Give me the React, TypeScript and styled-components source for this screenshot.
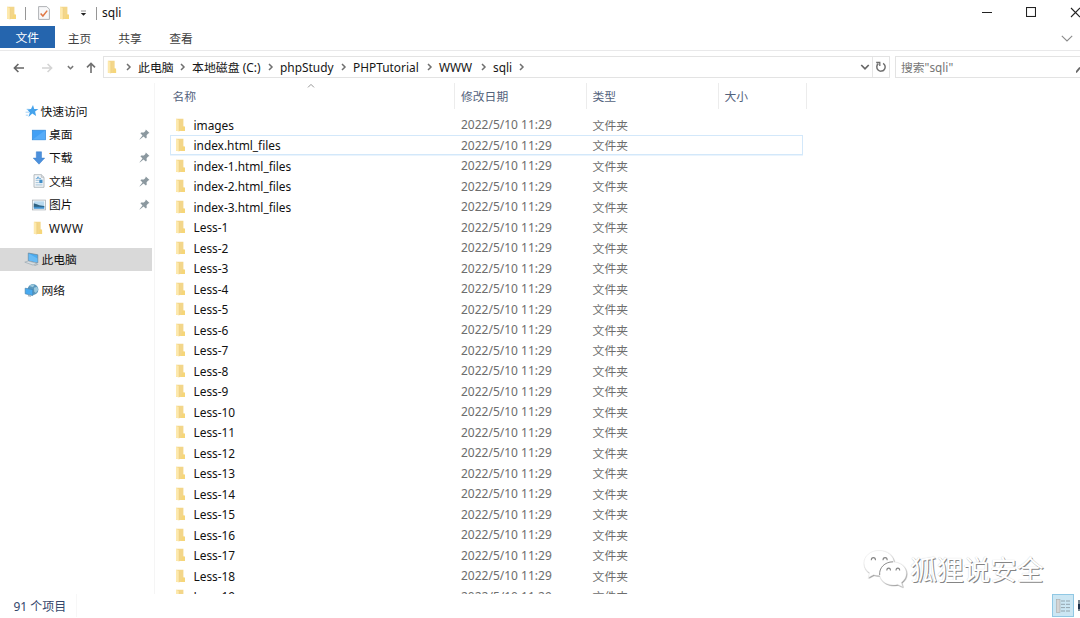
import React from "react";
import styled, { createGlobalStyle } from "styled-components";

const Global = createGlobalStyle`
  * { box-sizing: border-box; }
  html, body { margin: 0; height: 100%; overflow: hidden; background: #fff; }
  body {
    font-family: "Noto Sans", "Noto Sans CJK SC", sans-serif;
    font-size: 12px;
    color: #111;
  }
  svg { display: block; flex: none; }
`;

const Window = styled.div`
  width: 1080px;
  height: 618px;
  display: flex;
  flex-direction: column;
  overflow: hidden;
  background: #fff;
  position: relative;
  white-space: nowrap;
`;

const TitleBar = styled.header`
  height: 26px;
  display: flex;
  align-items: center;
  padding-left: 6px;
`;
const TitleText = styled.span`
  margin-left: 5px;
  line-height: 24px;
  height: 25px;
  color: #111;
`;
const Separator = styled.i<{ $left: number }>`
  width: 1px;
  height: 13px;
  margin-left: ${(p) => p.$left}px;
  background: #969696;
`;
const Gap = styled.i<{ $w: number }>`
  width: ${(p) => p.$w}px;
  flex: none;
`;
const Spacer = styled.i`
  flex: 1;
`;
const WindowControls = styled.div`
  display: flex;
  align-items: center;
  gap: 34px;
  width: 98px;
  height: 24px;
  margin-bottom: 2px;
  overflow: hidden;
`;

const Ribbon = styled.nav`
  height: 25px;
  display: flex;
  align-items: flex-start;
  border-bottom: 1px solid #e9e9ea;
`;
const Tab = styled.span<{ $active?: boolean; $width: number }>`
  width: ${(p) => p.$width}px;
  height: 22px;
  line-height: ${(p) => (p.$active ? 23 : 25)}px;
  text-align: center;
  font-size: 11.8px;
  color: ${(p) => (p.$active ? "#fff" : "#404040")};
  background: ${(p) => (p.$active ? "#2565ae" : "transparent")};
`;
const RibbonToggle = styled.div`
  margin: 9px 7px 0 auto;
`;

const NavBar = styled.div`
  height: 32px;
  display: flex;
  align-items: flex-start;
  padding-top: 5px;
`;
const NavButtons = styled.div`
  width: 103px;
  height: 23px;
  display: flex;
  align-items: center;
  padding-left: 13px;
`;
const AddressBox = styled.div`
  width: 787px;
  height: 22px;
  border: 1px solid #e3e3e3;
  display: flex;
  align-items: center;
  padding-left: 3px;
`;
const Crumb = styled.span<{ $width: number }>`
  width: ${(p) => p.$width}px;
  height: 20px;
  line-height: 20px;
  font-size: 11.9px;
  color: #161616;
`;
const CrumbArrow = styled.span<{ $width: number }>`
  width: ${(p) => p.$width}px;
`;
const RefreshCell = styled.div`
  width: 17px;
  height: 20px;
  border-left: 1px solid #e6e6e6;
  display: flex;
  align-items: center;
  justify-content: center;
`;
const SearchBox = styled.div`
  width: 185px;
  margin-left: 5px;
  height: 22px;
  border: 1px solid #e3e3e3;
  border-right: 0;
  display: flex;
  align-items: flex-start;
  padding-left: 5px;
  line-height: 20px;
  font-size: 11.8px;
  color: #767676;
  overflow: hidden;
`;
const SearchGlyph = styled.svg`
  margin-top: 5px;
`;

const Main = styled.main`
  height: 511px;
  flex: none;
  display: flex;
  overflow: hidden;
`;
const Sidebar = styled.aside`
  width: 155px;
  padding-top: 16.5px;
  border-right: 1px solid #f5f5f5;
`;
const SideItem = styled.div<{ $level?: number; $selected?: boolean; $gap?: number }>`
  width: 152.4px;
  height: 23.4px;
  margin-top: ${(p) => p.$gap || 0}px;
  padding-left: ${(p) => (p.$level ? 31 : 24)}px;
  padding-right: 2.4px;
  display: flex;
  align-items: center;
  background: ${(p) => (p.$selected ? "#d9d9d9" : "transparent")};
`;
const SideLabel = styled.span<{ $level?: number }>`
  margin-left: ${(p) => (p.$level ? 2 : 1.4)}px;
  flex: 1;
  height: 23px;
  line-height: 22px;
  font-size: 11.8px;
`;
const WideLabel = styled.span`
  letter-spacing: 0.5px;
`;

const Content = styled.section`
  flex: 1;
  display: flex;
  flex-direction: column;
`;
const HeaderRow = styled.div`
  height: 31.4px;
  flex: none;
  display: flex;
  font-size: 11.8px;
  color: #53627c;
  position: relative;
`;
const HeaderCell = styled.div<{ $width: number; $pad: number }>`
  width: ${(p) => p.$width}px;
  height: 26px;
  line-height: 26px;
  padding-left: ${(p) => p.$pad}px;
  border-right: 1px solid #ececec;
`;
const SortMark = styled.span`
  position: absolute;
  left: 152px;
  top: -1px;
`;
const FileRow = styled.div<{ $focused?: boolean }>`
  width: 633px;
  height: 20.5px;
  margin-left: 15px;
  flex: none;
  display: flex;
  align-items: center;
  line-height: 20px;
  box-shadow: ${(p) => (p.$focused ? "inset 0 0 0 1px #d3e8fa, 0 1px 0 #eaf4fd" : "none")};
`;
const FileIcon = styled.span`
  width: 23.5px;
  padding-left: 5px;
`;
const FileName = styled.span`
  width: 267.5px;
  font-size: 11.9px;
  letter-spacing: -0.02px;
  color: #111;
`;
const FileDate = styled.span`
  width: 131.6px;
  padding-top: 1px;
  color: #6d6d6d;
`;
const FileType = styled.span`
  font-size: 11.8px;
  color: #6d6d6d;
`;

const StatusBar = styled.footer`
  height: 24px;
  display: flex;
  align-items: flex-start;
  color: #34466b;
`;
const Count = styled.span`
  width: 77px;
  height: 23px;
  line-height: 25px;
  padding-left: 13.5px;
  border-right: 1px solid #f7f7f7;
`;
const ViewButton = styled.div`
  width: 22px;
  height: 23px;
  margin-left: auto;
  border: 1px solid #90c8e4;
  background: #cbe6f3;
  display: flex;
  align-items: center;
  justify-content: center;
`;
const ViewPeek = styled.div`
  width: 6px;
  height: 23px;
  padding: 6px 0 0 4px;
`;

const Watermark = styled.div`
  position: absolute;
  left: 862px;
  top: 548px;
  display: flex;
  align-items: center;
  height: 42px;
`;
const WatermarkText = styled.span`
  margin-left: 2px;
  padding-top: 2px;
  font-size: 27px;
  line-height: 44px;
  letter-spacing: -0.3px;
  color: #fff;
  text-shadow: 1px 1px 0.5px #858585, 0 0 1px #c4c4c4;
`;

const Folder = ({ w = 11, h = 14 }: { w?: number; h?: number }) => (
  <svg width={w} height={h} viewBox="0 0 11 14" preserveAspectRatio="none">
    <path d="M1 .8h7.4v7.7l1.600 1V13H1z" fill="#f3d68a" />
    <path d="M7.400 8.500h2.600V13H6z" fill="#f6d679" />
    <path d="M1 .8l3.200 1.400v11.300L1 12.700z" fill="#fde9ad" />
    <path d="M4.200 2.200v11" stroke="#eccb78" strokeWidth=".6" />
  </svg>
);

const Chevron = ({ dir, color = "#707070", size = 8, sw = 1.5 }: { dir: "right" | "down" | "up"; color?: string; size?: number; sw?: number }) => {
  const d = { right: "M2 1L5 4L2 7", down: "M1 2.4L4 5.4L7 2.4", up: "M1 5.4L4 2.4L7 5.4" }[dir];
  return (
    <svg width={size} height={size} viewBox="0 0 8 8">
      <path d={d} fill="none" stroke={color} strokeWidth={(sw * 8) / size} />
    </svg>
  );
};

const Arrow = ({ dir, color }: { dir: "left" | "right" | "up"; color: string }) => {
  const angle = { left: 0, up: 90, right: 180 }[dir];
  return (
    <svg width="12" height="12" viewBox="0 0 12 12">
      <path d="M11 6H1.5M5.4 2L1.4 6l4 4" fill="none" stroke={color} strokeWidth="1.6" transform={`rotate(${angle} 6 6)`} />
    </svg>
  );
};

const Pin = () => (
  <svg width="11" height="11" viewBox="0 0 11 11">
    <path d="M6.8.5l3.7 3.6-1.3.5-1.6 1.7.1 2.5-.8.8L4.5 7.4.8 10.5.5 10.2l3-3.8L1.4 4.2l.8-.8 2.7.2 1.5-1.7z" fill="#8b989f" />
  </svg>
);

const StarIcon = () => (
  <svg width="15" height="14" viewBox="0 0 15 14">
    <path d="M9 1l1.200 3.900 4.200.1-3.300 2.600 1 4.400-3.800-2.400L4.500 13l1.300-4.600L3 5.300l4-.2z" fill="#45a3ec" />
    <path d="M2.600 5.300h3M1.600 8.200h3.500M1.800 11.200h2.500" stroke="#8ec8f4" strokeWidth=".8" />
  </svg>
);

const DesktopIcon = () => (
  <svg width="16" height="14" viewBox="0 0 16 14">
    <rect x="1.3" y="2.2" width="13.2" height="9.6" fill="#42a0f5" stroke="#3489d8" strokeWidth=".7" />
    <path d="M1.7 11.4L14 2.6v8.8z" fill="#57acf8" />
  </svg>
);

const DownloadIcon = () => (
  <svg width="16" height="14" viewBox="0 0 16 14">
    <path d="M5.3.8h5.2v6.3h3.2L8 13.2 2.2 7.1h3.1z" fill="#4b90dc" stroke="#397dca" strokeWidth=".5" />
  </svg>
);

const DocumentIcon = () => (
  <svg width="16" height="14" viewBox="0 0 16 14">
    <path d="M3 .7h7.300l2.700 2.600v10H3z" fill="#f3f6f8" stroke="#a4adb3" strokeWidth=".8" />
    <path d="M10.300.7v2.600H13" fill="#ddd" stroke="#a4adb3" strokeWidth=".6" />
    <path d="M4.800 4.600h1.700V3h1.200v1.600h2.300" fill="none" stroke="#6ba7d6" strokeWidth=".9" />
    <path d="M4.600 6.400h3.200M4.600 8.600h3.200M4.600 10.900h7" fill="none" stroke="#9dbfd6" strokeWidth=".9" />
    <path d="M8.300 5.700h3.200v3.400H8.300z" fill="#3f8dc6" />
  </svg>
);

const PictureIcon = () => (
  <svg width="16" height="14" viewBox="0 0 16 14">
    <rect x="1.500" y="2.100" width="13" height="9.800" fill="#fff" stroke="#a8b0b5" strokeWidth=".8" />
    <path d="M2.700 3.300h10.600v7.400H2.700z" fill="#b9daf0" />
    <path d="M2.700 5.600c3 0 5 2.400 10.600 2.400v1H2.700z" fill="#2f6280" />
    <path d="M2.700 8.800h10.600v1.900H2.700z" fill="#3f90cd" />
  </svg>
);

const ComputerIcon = () => (
  <svg width="16" height="15" viewBox="0 0 16 15">
    <path d="M4.300 1l9.500 1.800v8L4.300 8.700z" fill="#4aabf0" stroke="#6f8593" strokeWidth=".7" />
    <path d="M4.700 1.500l8.700 5v4l-8.700-2z" fill="#68bbf5" />
    <path d="M.8 10.200l3.500-1.200 8.500 2.300-3.800 1.800z" fill="#d6dde1" stroke="#93a2ac" strokeWidth=".6" />
    <path d="M9.700 13.200l3.800-1.400 1.200.6-3.600 1.600z" fill="#a9b4bb" />
  </svg>
);

const NetworkIcon = () => (
  <svg width="16" height="15" viewBox="0 0 16 15">
    <circle cx="9" cy="6.500" r="5.400" fill="#5b98bd" />
    <path d="M5.500 3c1.600-1.500 4-1.800 5-1.300L9 4.300zM10 4.800l3.300-1 .9 3.200-2.400 3-1.600-1.500z" fill="#9cc9dd" />
    <path d="M1.200 5.200l7.600 1.400v6L1.200 10.800z" fill="#48aaf0" stroke="#4683ae" strokeWidth=".7" />
    <path d="M4.200 12l2.800.6v1.200l-3.200-.6z" fill="#9cabb5" />
  </svg>
);

const crumbs: [string, number, number][] = [
  ["此电脑", 41, 13],
  ["本地磁盘 (C:)", 75, 13],
  ["phpStudy", 60, 13],
  ["PHPTutorial", 73, 13],
  ["WWW", 41, 13],
  ["sqli", 25, 13],
];

const quickAccess: [string, React.ReactNode, boolean][] = [
  ["桌面", <DesktopIcon />, true],
  ["下载", <DownloadIcon />, true],
  ["文档", <DocumentIcon />, true],
  ["图片", <PictureIcon />, true],
  ["WWW", <><Gap $w={2} /><Folder w={10} h={14} /><Gap $w={4} /></>, false],
];

const files = [
  "images",
  "index.html_files",
  "index-1.html_files",
  "index-2.html_files",
  "index-3.html_files",
  ...Array.from({ length: 19 }, (_, i) => `Less-${i + 1}`),
];

export default function App() {
  return (
    <Window>
      <Global />
      <TitleBar>
        <Folder />
        <Separator $left={8} />
        <Gap $w={12} />
        <svg width="12" height="14" viewBox="0 0 12 14">
          <path d="M.6.6h8.200l2.600 2.600v10.200H.6z" fill="#f8f8f9" stroke="#a6a9ad" strokeWidth=".9" />
          <path d="M2.600 7.400l2.300 2.600 4.300-5.400" fill="none" stroke="#e07744" strokeWidth="1.500" />
        </svg>
        <Gap $w={9} />
        <Folder />
        <Gap $w={9.5} />
        <svg width="7" height="7" viewBox="0 0 7 7">
          <path d="M1 1h5" stroke="#777" strokeWidth=".8" />
          <path d="M.8 3h5.400L3.500 5.800z" fill="#222" />
        </svg>
        <Separator $left={9.5} />
        <TitleText>sqli</TitleText>
        <Spacer />
        <WindowControls>
          <svg width="10" height="10"><path d="M0 5.500h10" stroke="#222" /></svg>
          <svg width="10" height="10"><rect x=".5" y=".5" width="9" height="9" fill="none" stroke="#222" strokeWidth="1.100" /></svg>
          <svg width="11" height="11"><path d="M1 1l9 9M10 1L1 10" stroke="#222" strokeWidth="1.100" /></svg>
        </WindowControls>
      </TitleBar>

      <Ribbon>
        <Tab $active $width={54.5}>文件</Tab>
        <Tab $width={50}>主页</Tab>
        <Tab $width={51}>共享</Tab>
        <Tab $width={51}>查看</Tab>
        <RibbonToggle>
          <svg width="12" height="7" viewBox="0 0 12 7"><path d="M.8.8L6 6l5.200-5.200" fill="none" stroke="#8b8b8b" strokeWidth="1.100" /></svg>
        </RibbonToggle>
      </Ribbon>

      <NavBar>
        <NavButtons>
          <Arrow dir="left" color="#666" />
          <Gap $w={16} />
          <Arrow dir="right" color="#d4d4d4" />
          <Gap $w={14} />
          <Chevron dir="down" size={7} color="#777" />
          <Gap $w={11} />
          <Arrow dir="up" color="#707070" />
        </NavButtons>
        <AddressBox>
          <Folder w={10} h={14} />
          <Gap $w={8} />
          <CrumbArrow $width={13}><Chevron dir="right" /></CrumbArrow>
          {crumbs.map(([label, w, a]) => (
            <React.Fragment key={label}>
              <Crumb $width={w}>{label}</Crumb>
              <CrumbArrow $width={a}><Chevron dir="right" /></CrumbArrow>
            </React.Fragment>
          ))}
          <Spacer />
          <Chevron dir="down" size={10} color="#666" sw={1.7} />
          <Gap $w={2} />
          <RefreshCell>
            <svg width="12" height="12" viewBox="0 0 12 12">
              <path d="M8.100 2.300A4.200 4.200 0 1 1 3.300 2.700" fill="none" stroke="#707070" strokeWidth="1.500" />
              <path d="M1.200 1.500h3.600v3.600" fill="none" stroke="#707070" strokeWidth="1.300" />
            </svg>
          </RefreshCell>
        </AddressBox>
        <SearchBox>
          搜索"sqli"
          <Spacer />
          <SearchGlyph width="4" height="12"><path d="M0 10.500L4 5.500" stroke="#666" strokeWidth="1.800" /></SearchGlyph>
        </SearchBox>
      </NavBar>

      <Main>
        <Sidebar>
          <SideItem>
            <StarIcon />
            <SideLabel>快速访问</SideLabel>
          </SideItem>
          {quickAccess.map(([label, icon, pinned]) => (
            <SideItem $level={1} key={label}>
              {icon}
              <SideLabel $level={1}>{pinned ? label : <WideLabel>{label}</WideLabel>}</SideLabel>
              {pinned && <Pin />}
            </SideItem>
          ))}
          <SideItem $selected $gap={7.8}>
            <ComputerIcon />
            <SideLabel>此电脑</SideLabel>
          </SideItem>
          <SideItem $gap={8}>
            <NetworkIcon />
            <SideLabel>网络</SideLabel>
          </SideItem>
        </Sidebar>
        <Content>
          <HeaderRow>
            <HeaderCell $width={300} $pad={17.5}>名称</HeaderCell>
            <HeaderCell $width={132} $pad={6}>修改日期</HeaderCell>
            <HeaderCell $width={132} $pad={5.5}>类型</HeaderCell>
            <HeaderCell $width={88} $pad={5.5}>大小</HeaderCell>
            <SortMark><Chevron dir="up" size={8} color="#8a8a8a" sw={0.9} /></SortMark>
          </HeaderRow>
          {files.map((name, i) => (
            <FileRow key={name} $focused={i === 1}>
              <FileIcon><Folder w={11} h={14} /></FileIcon>
              <FileName>{name}</FileName>
              <FileDate>2022/5/10 11:29</FileDate>
              <FileType>文件夹</FileType>
            </FileRow>
          ))}
        </Content>
      </Main>

      <StatusBar>
        <Count>91 个项目</Count>
        <ViewButton>
          <svg width="14" height="14" viewBox="0 0 14 14">
            <rect x=".5" y=".5" width="3.500" height="13" fill="#d5d5d5" stroke="#aaa" strokeWidth=".6" />
            <path d="M5 2h4M10 2h4M5 5.300h4M10 5.300h4M5 8.600h4M10 8.600h4M5 12h4M10 12h4" stroke="#8d9da6" strokeWidth=".9" />
          </svg>
        </ViewButton>
        <ViewPeek>
          <svg width="2" height="11"><rect width="2" height="11" fill="#7b8791" /><rect y="4" width="2" height="5" fill="#1d3049" /></svg>
        </ViewPeek>
      </StatusBar>

      <Watermark>
        <svg width="46" height="42" viewBox="0 0 46 42">
          <defs>
            <filter id="relief" x="-10%" y="-10%" width="125%" height="125%">
              <feDropShadow dx=".6" dy=".8" stdDeviation=".4" floodColor="#777" floodOpacity=".9" />
            </filter>
          </defs>
          <g filter="url(#relief)" fill="#fff" stroke="#e2e2e2" strokeWidth=".4">
            <path d="M17 2.500C8.500 2.500 2 8 2 15c0 4.200 2 7.500 5.500 9.800L6.300 29.500l5.200-2.700c1.700.5 3.500.8 5.500.8 8.300 0 15-5.600 15-12.600S25.300 2.500 17 2.500z" />
            <path d="M31 14c-7.700 0-13.500 5-13.500 11.300S23.300 37 31 37c1.600 0 3.200-.2 4.600-.6l5 2.400-1.300-4.300c3-2.200 5-5.400 5-9.200C44.300 19 38.700 14 31 14z" />
          </g>
          <g fill="none" stroke="#858585">
            <path d="M17.700 27c-.8-7 5-13.200 13.300-13.200" strokeWidth=".9" />
            <path d="M9.300 12.300c0-3.600 4.200-3.600 4.200 0M21 12.300c0-3.600 4.200-3.600 4.200 0M24.800 22.500c0-3.200 3.700-3.200 3.700 0M34 22.500c0-3.200 3.700-3.200 3.700 0" strokeWidth="1.100" />
          </g>
        </svg>
        <WatermarkText>狐狸说安全</WatermarkText>
      </Watermark>
    </Window>
  );
}
